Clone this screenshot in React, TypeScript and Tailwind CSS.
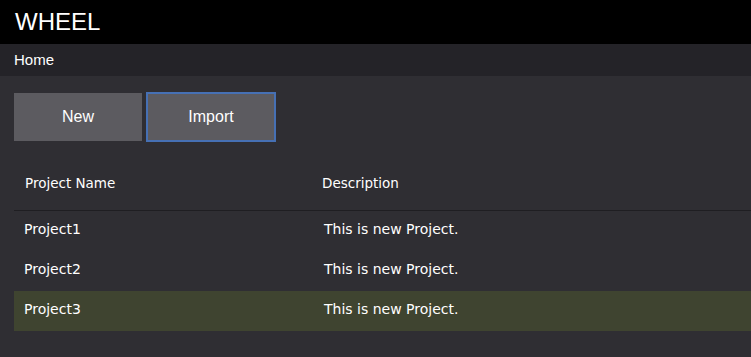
import React from "react";

const rows = [
  { name: "Project1", desc: "This is new Project.", selected: false },
  { name: "Project2", desc: "This is new Project.", selected: false },
  { name: "Project3", desc: "This is new Project.", selected: true },
];

export default function App() {
  return (
    <div className="w-[751px] h-[357px] overflow-hidden bg-[#2f2e33] flex flex-col text-white">
      <header className="h-[44px] bg-black flex items-center pl-[15px] shrink-0">
        <span className="text-[24px] leading-none font-['Liberation_Sans',Arial,sans-serif]">WHEEL</span>
      </header>
      <nav className="h-[32px] bg-[#242328] flex items-center pl-[14px] shrink-0">
        <span className="text-[15px] font-['Liberation_Sans',Arial,sans-serif]">Home</span>
      </nav>
      <main className="flex flex-col pl-[14px]">
        <div className="flex items-center gap-[4px] pt-[16px] h-[65px]">
          <button className="w-[128px] h-[48px] bg-[#5c5b60] text-[16px] font-['Liberation_Sans',Arial,sans-serif] text-white">
            New
          </button>
          <button className="w-[130px] h-[50px] bg-[#5c5b60] border-2 border-[#4670b4] text-[16px] font-['Liberation_Sans',Arial,sans-serif] text-white">
            Import
          </button>
        </div>
        <div className="font-['DejaVu_Sans',Verdana,sans-serif]">
          <div className="flex pt-[32px] pb-[17px] border-b border-[#1f1e22] text-[13.5px]">
            <div className="w-[297px] pl-[11px] leading-[20px]">Project Name</div>
            <div className="pl-[11px] leading-[20px]">Description</div>
          </div>
          {rows.map((r) => (
            <div
              key={r.name}
              className={`flex items-center h-[40px] pb-[4px] text-[14px] ${r.selected ? "bg-[#3f4430]" : ""}`}
            >
              <div className="w-[297px] pl-[10px]">{r.name}</div>
              <div className="pl-[13px]">{r.desc}</div>
            </div>
          ))}
        </div>
      </main>
    </div>
  );
}
